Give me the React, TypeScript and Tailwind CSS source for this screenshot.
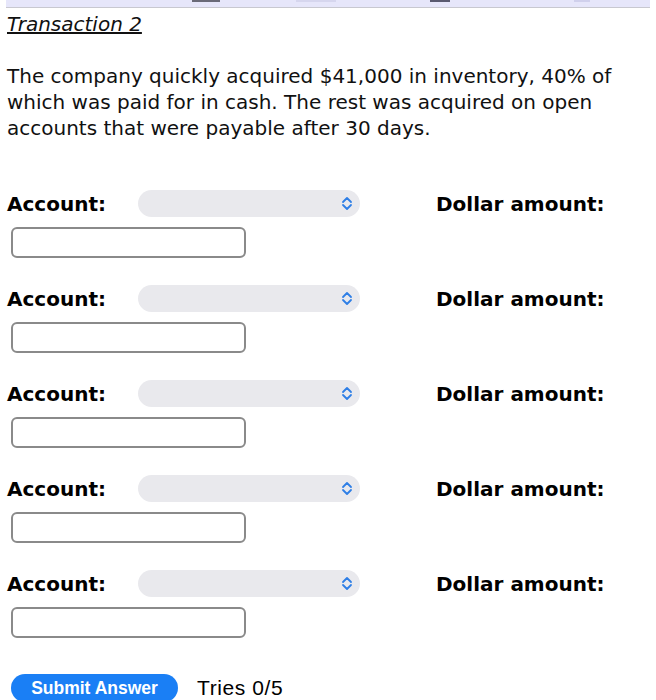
import React from 'react';

function Chevrons() {
  return (
    <svg width="12" height="15" viewBox="0 0 12 15" fill="none" stroke="#2f7fe6" strokeWidth="1.8" strokeLinecap="round" strokeLinejoin="round">
      <path d="M2 6 L6 2 L10 6" />
      <path d="M2 9 L6 13 L10 9" />
    </svg>
  );
}

function EntryRow() {
  return (
    <div className="flex flex-col">
      <div className="flex items-center h-[27px]">
        <span className="w-[131px] font-bold text-[20px] text-black">Account:</span>
        <div className="w-[222px] h-[27px] rounded-full bg-[#e9e9ed] flex items-center justify-end pr-[7px]">
          <Chevrons />
        </div>
        <span className="ml-[76px] font-bold text-[20px] text-black">Dollar amount:</span>
      </div>
      <div className="mt-[10px] ml-[4px] w-[235px] h-[31px] rounded-[6px] border-2 border-[#8a8a8a] bg-white" />
    </div>
  );
}

export default function App() {
  const rows = [0, 1, 2, 3, 4];
  return (
    <div className="w-[656px] h-[700px] overflow-hidden bg-white" style={{ fontFamily: '"DejaVu Sans", sans-serif' }}>
      <div className="mx-[6px] h-[8px] bg-[#e6e6fa] border-b border-[#c8c8d0] relative">
        <div className="absolute left-[186px] top-0 w-[28px] h-[2px] bg-[#6a6a78]" />
        <div className="absolute left-[424px] top-0 w-[20px] h-[2px] bg-[#5a5a70]" />
        <div className="absolute left-[290px] top-0 w-[40px] h-[2px] bg-[#d6d6ee]" />
        <div className="absolute left-[568px] top-0 w-[16px] h-[2px] bg-[#d0d0ec]" />
      </div>
      <div className="px-[7px]">
        <div className="mt-[3px] text-[20px] leading-[26px] italic underline text-[#111]">Transaction 2</div>
        <p className="mt-[26px] text-[20px] leading-[26px] text-[#111] w-[630px]">
          The company quickly acquired $41,000 in inventory, 40% of which was paid for in cash. The rest was acquired on open accounts that were payable after 30 days.
        </p>
        <div className="mt-[49px] flex flex-col gap-[27px]">
          {rows.map(r => (
            <EntryRow key={r} />
          ))}
        </div>
        <div className="mt-[34px] ml-[4px] flex items-center gap-[19px]" style={{ fontFamily: '"Liberation Sans", Arial, sans-serif' }}>
          <button className="w-[167px] h-[28px] rounded-full bg-[#1a7ff5] text-white font-bold text-[17.5px]">Submit Answer</button>
          <span className="text-[21px] tracking-[0.6px] text-black">Tries 0/5</span>
        </div>
      </div>
    </div>
  );
}
